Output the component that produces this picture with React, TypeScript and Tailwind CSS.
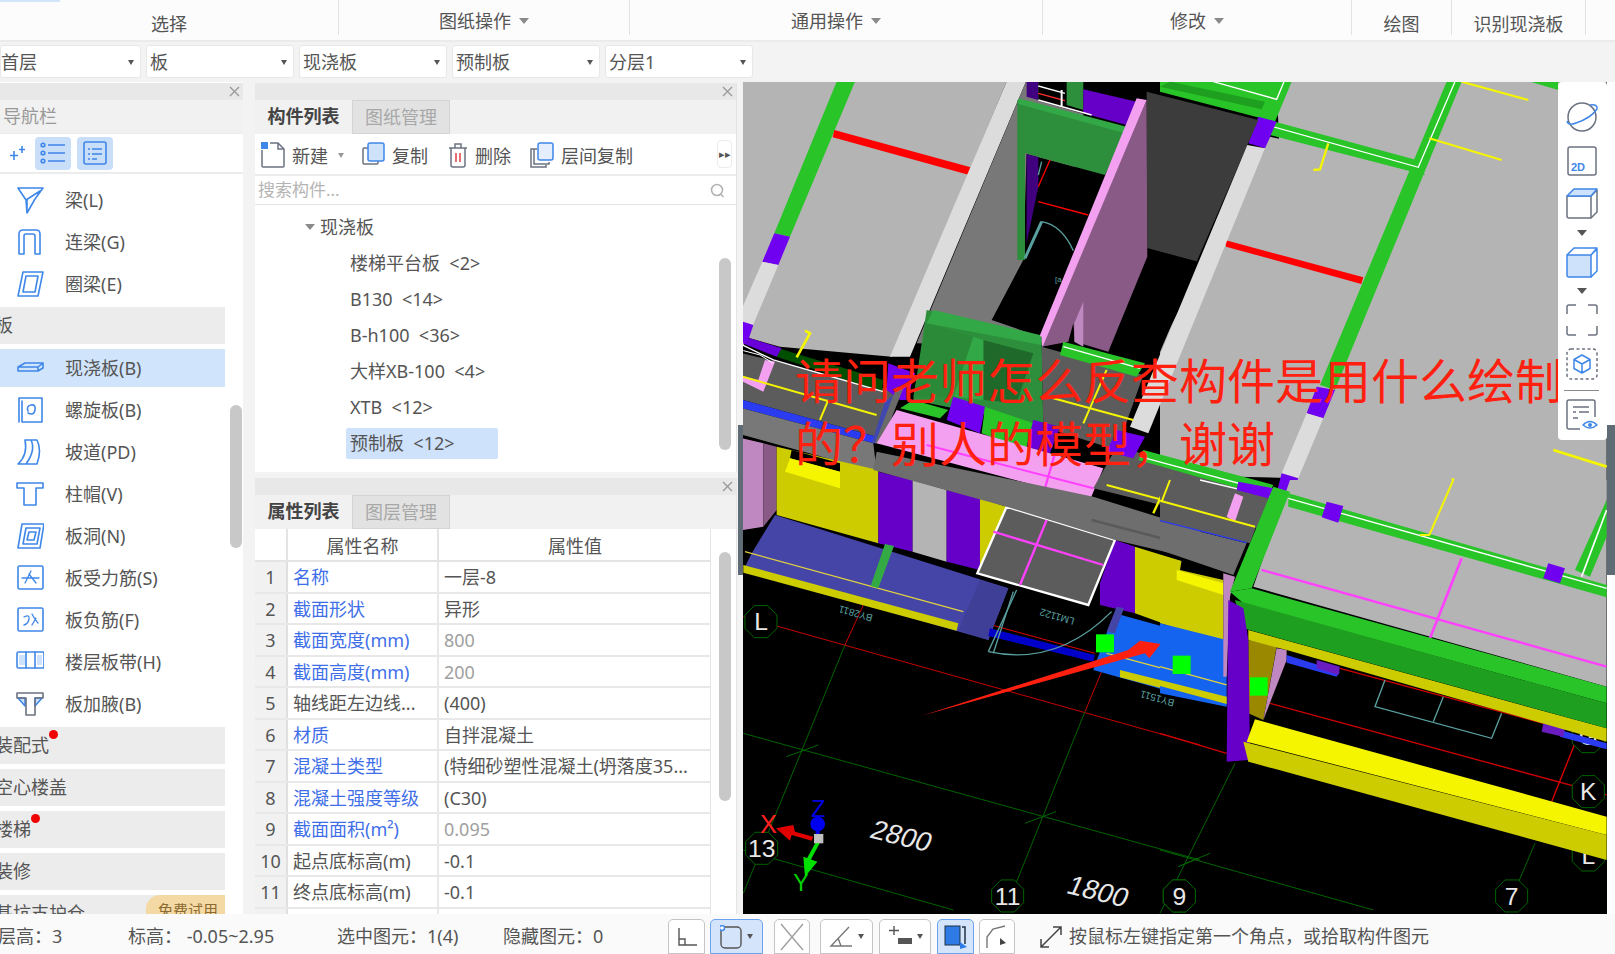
import React from 'react';

const BLUE = '#3f87e8';
const GRAY = '#6b7280';
const COLON = '\uFF1A';
const COMMA = '\uFF0C';
const QUESTION = '\uFF1F';

// ---------- small helpers for the 3D model drawing ----------
function P({ p, f }: { p: string; f: string }) {
    return <polygon points={p} fill={f} />;
}

function L({ p, c, w = 3 }: { p: string; c: string; w?: number }) {
    return <polyline points={p} fill="none" stroke={c} strokeWidth={w} />;
}

function Octagon({ x, y, label, r = 52 }: { x: number; y: number; label: string; r?: number }) {
    const pts = Array.from({ length: 8 }, (_, i) => {
        const a = (Math.PI / 4) * i + Math.PI / 8;
        return `${x + r * Math.cos(a)},${y + r * Math.sin(a)}`;
    }).join(' ');
    return (
        <g>
            <polygon points={pts} fill="#000" stroke="#006400" strokeWidth={3} />
            <text x={x} y={y + 26} textAnchor="middle" fontSize={74} fill="#e8e8e8" fontFamily="Liberation Sans, sans-serif">{label}</text>
        </g>
    );
}

function Model() {
    return (
        <svg viewBox="743 82 864 832" className="absolute inset-0 w-full h-full">
            <rect x="743" y="82" width="864" height="832" fill="#000" />

            {/* far rooms, upper right */}
            <g transform="translate(1160 80) scale(0.3333)">
                <P p="350,5 1340,5 1340,1260 400,1260" f="#b4b4b4" />
                <P p="330,170 770,270 415,1195 235,1190 0,1130 0,800" f="#b4b4b4" />
                <P p="0,0 395,5 345,125 0,35" f="#28c428" />
                <P p="30,5 315,65 305,88 0,20" f="#1f9f1f" />
                <L p="160,5 350,58 372,5" c="#fff" w={4} />
                <P p="345,125 770,240 795,285 330,165" f="#28c428" />
                <P p="860,5 905,5 525,930 480,915" f="#28c428" />
                <L p="320,135 775,262 885,5" c="#fff" w={4} />
                <L p="905,5 1105,60" c="#f5f500" w={6} />
                <L p="808,175 1025,240" c="#f5f500" w={6} />
                <L p="505,190 480,268 460,270" c="#f5f500" w={7} />
                <L p="1180,1110 1340,1160" c="#f5f500" w={8} />
                <L p="880,1195 855,1260" c="#f5f500" w={8} />
                <P p="1110,5 1195,5 1195,30" f="#28c428" />
                <P p="195,480 610,592 604,612 198,500" f="#ff0000" />
                <P p="295,110 350,125 315,205 265,190" f="#7000f0" />
                <P p="470,920 525,930 490,1015 440,1000" f="#7000f0" />
                <P p="440,1000 490,1015 415,1195 365,1180" f="#dcdcdc" />
                <P p="365,1180 415,1195 385,1260 350,1240" f="#7000f0" />
            </g>

            {/* upper left rooms */}
            <g transform="translate(740 80) scale(0.3333)">
                <P p="8,5 800,5 455,830 120,800 30,775 8,760" f="#b4b4b4" />
                <P p="290,5 345,5 150,470 103,460" f="#28c428" />
                <P p="103,460 150,470 115,555 67,545" f="#7000f0" />
                <P p="67,545 115,555 35,745 8,800 8,680" f="#dcdcdc" />
                <P p="283,150 692,262 685,284 278,172" f="#ff0000" />
                <P p="800,5 858,5 510,830 450,830" f="#dcdcdc" />
                <P p="858,5 1030,5 1030,120 900,800 530,790" f="#787878" />

                <P p="1220,35 1555,120 1370,545 1222,505" f="#3c3c3c" />
                <P p="1222,505 1375,545 1250,840 1105,815" f="#000" />
                <P p="1522,195 1575,205 1225,1060 1170,1040" f="#dcdcdc" />

                <P p="860,5 895,5 895,60 860,50" f="#400080" />
                <P p="895,5 1030,5 1060,110 895,62" f="#000" />
                <P p="980,5 1030,5 1030,90 980,75" f="#2d8f3c" />
                <P p="1030,28 1190,65 1160,135 1030,100" f="#6600c8" />
                <L p="895,18 975,40" c="#fff" w={4} />
                <L p="895,40 975,62" c="#ff3030" w={4} />
                <L p="895,60 1055,105" c="#fff" w={4} />
                <L p="965,30 965,80" c="#fff" w={6} />

                <P p="860,222 1095,285 900,770 755,720 850,540" f="#000" />
                <P p="832,60 1160,150 1095,285 855,220 855,540 832,540" f="#2d8f3c" />
                <P p="835,55 1160,140 1155,160 835,72" f="#33a847" />
                <P p="860,222 895,232 895,320 860,490" f="#400080" />
                <L p="930,240 895,320" c="#ff0000" w={4} />
                <L p="895,365 1045,405" c="#ff0000" w={4} />
                <L p="905,245 895,285" c="#5aa0a0" w={4} />
                <path d="M905 425 Q965 435 1000 512" fill="none" stroke="#5aa0a0" strokeWidth={4} />
                <L p="905,425 855,535" c="#5aa0a0" w={9} />
                <text x="945" y="605" fontSize={24} fill="#5aa0a0" fontFamily="Liberation Sans, sans-serif">[a</text>

                <P p="1220,60 1222,530 1105,815 1005,785 1000,730 985,785 905,800" f="#885a85" />
                <P p="1030,665 1003,730 1003,785 1030,800" f="#c088c0" />
                <P p="1190,55 1220,60 908,800 898,770" f="#f4a0f0" />

                {/* stair / green block */}
                <P p="560,690 905,770 910,1040 520,960" f="#2d8f3c" />
                <P p="730,780 880,820 830,970 730,960" f="#1f6a2a" />
                <P p="560,730 700,770 640,950 520,950" f="#2a8a38" />
                <P p="700,770 730,780 730,960 640,950" f="#33a847" />
                <P p="580,690 900,765 905,795 560,730" f="#33a847" />

                {/* corridor band on the left */}
                <P p="8,820 470,935 410,1070 8,960" f="#5c5c5c" />
                <P p="8,905 70,935 105,845 75,840 55,900 8,890" f="#f4a0f0" />
                <P p="115,805 430,900 425,935 110,830" f="#005000" />
                <P p="30,775 125,805 110,830 8,790" f="#6a00d8" />
                <P p="8,725 40,735 25,780 8,790" f="#7000f0" />
                <P p="445,850 525,880 500,960 480,960 440,930" f="#7000f0" />
                <L p="8,795 100,840 430,935" c="#fff" w={4} />
                <L p="10,812 60,825 100,850" c="#fff" w={3} />
                <L p="8,890 410,1005" c="#f5f500" w={6} />
                <L p="265,960 240,1020" c="#f5f500" w={6} />
                <L p="195,752 210,760 170,832" c="#f5f500" w={8} />
                <P p="8,960 410,1070 400,1090 8,985" f="#2b3cf0" />
                <P p="8,985 400,1090 410,1175 8,1065" f="#787878" />
                <P p="435,965 480,930 420,1090 395,1090" f="#4048b0" />
                <P p="470,920 490,925 425,1090 405,1090" f="#6a6a6a" />

                {/* right of pink wall */}
                <P p="905,800 1210,885 1130,1110 910,1040" f="#5c5c5c" />
                <P p="970,785 1215,850 1190,890 960,825" f="#28c428" />
                <L p="970,800 1200,865" c="#fff" w={4} />
                <L p="940,955 1180,1020" c="#f5f500" w={6} />
                <L p="1100,870 1030,1030" c="#f5f500" w={6} />

                {/* band of purple/green columns */}
                <P p="520,960 625,990 600,1015 480,985" f="#28c428" />
                <P p="640,950 735,980 720,1060 620,1020" f="#7000f0" />
                <P p="735,980 880,1030 860,1110 725,1060" f="#28c428" />
                <P p="880,1020 960,1040 930,1120 860,1100" f="#6a00d8" />

                {/* pink floor */}
                <P p="470,990 1090,1165 1050,1260 410,1090" f="#f4a0f0" />
                <L p="560,1095 1060,1225" c="#ff40ff" w={6} />
                <L p="945,1120 915,1225" c="#ff40ff" w={7} />

                {/* dark tile, right */}
                <P p="1130,1100 1600,1225 1550,1345 1060,1225" f="#5c5c5c" />
                <P p="1130,1050 1215,1070 1180,1135 1100,1115" f="#7000f0" />
                <P p="1210,1110 1600,1215 1585,1250 1195,1140" f="#28c428" />
                <L p="1200,1130 1600,1238" c="#fff" w={4} />
                <L p="1100,1215 1380,1290" c="#f5f500" w={6} />
                <L p="1295,1180 1240,1300" c="#f5f500" w={7} />
            </g>

            {/* lower left: walls, platforms, axis grid */}
            <g transform="translate(740 480) scale(0.3333)">
                <P p="8,-125 70,-110 70,140 8,150" f="#c088c0" />
                <P p="70,-110 110,-100 110,90 70,140" f="#885a85" />
                <P p="110,-100 415,-30 415,190 110,105" f="#cccc00" />
                <P p="155,-90 300,-50 300,-25 150,-65" f="#000" />
                <P p="150,-65 300,-25 300,25 135,-25" f="#f5f500" />
                <P p="415,-25 518,0 518,215 415,190" f="#6600c8" />
                <P p="518,0 620,30 620,245 518,215" f="#b4b4b4" />
                <P p="620,30 720,55 720,270 620,245" f="#6600c8" />
                <P p="720,55 800,80 712,280 720,270" f="#cccc00" />
                <P p="1125,180 1185,200 1185,400 1080,375 1080,310" f="#6600c8" />
                <P p="1185,200 1380,260 1380,470 1185,400" f="#cccc00" />
                <P p="1325,235 1380,250 1380,290 1325,270" f="#000" />
                <P p="1315,270 1380,290 1380,325 1315,300" f="#f5f500" />

                {/* axis lines */}
                <L p="10,410 1380,795" c="#c80000" />
                <L p="755,435 1065,520" c="#e00000" />
                <L p="370,375 315,495" c="#c80000" />
                <L p="315,495 10,1240" c="#006400" />
                <L p="1085,575 1035,695" c="#c80000" />
                <L p="1035,695 800,1280" c="#006400" />
                <L p="10,760 1380,1140" c="#006400" />
                <L p="10,1110 640,1290" c="#006400" />
                <L p="140,830 235,795" c="#006400" />
                <L p="855,1030 948,995" c="#006400" />
                <L p="1315,1160 1375,1135" c="#006400" />

                <P p="105,105 805,325 745,480 10,270 35,220" f="#4545a8" />
                <P p="805,325 745,480 655,450 720,300" f="#3f3f98" />
                <P p="10,255 655,430 650,452 10,278" f="#cccc00" />
                <L p="15,215 670,395" c="#e0d040" w={4} />
                <P p="435,192 462,198 415,325 392,318" f="#33aa44" />

                <P p="750,445 1065,525 1060,545 745,468" f="#0000c8" />
                <path d="M745 515 Q950 560 1115 395" fill="none" stroke="#5aa0a0" strokeWidth={4} />
                <L p="830,330 745,515" c="#5aa0a0" w={4} />
                <L p="820,335 760,520" c="#5aa0a0" w={4} />

                <P p="800,80 1125,180 1045,375 712,280" f="#5c5c5c" />
                <polygon points="800,80 1125,180 1045,375 712,280" fill="none" stroke="#fff" strokeWidth={7} />
                <L p="760,155 1090,255" c="#ff40ff" w={7} />
                <L p="920,120 840,315" c="#ff40ff" w={7} />

                {/* gray beam across the model */}
                <P p="410,-85 1060,50 1380,150 1380,240 1125,180 800,80 400,-30" f="#6e6e6e" />
                <L p="1055,120 1380,205" c="#5a5a5a" w={8} />

                <P p="1125,400 1380,470 1380,660 1060,570 1100,460" f="#1464f0" />
                <P p="1140,570 1380,630 1380,655 1140,592" f="#cccc00" />
                <L p="1100,520 1380,595" c="#e0d040" w={4} />
                <P p="1130,380 1152,385 1125,460 1100,455" f="#4545a8" />
                <P p="1068,463 1122,463 1122,517 1068,517" f="#00ff00" />
                <P p="1298,527 1352,527 1352,582 1298,582" f="#00ff00" />

                <text transform="translate(400 405) rotate(196)" fontSize={30} fill="#5aa0a0" fontFamily="Liberation Sans, sans-serif">BY2811</text>
                <text transform="translate(1005 415) rotate(196)" fontSize={30} fill="#5aa0a0" fontFamily="Liberation Sans, sans-serif">LM1122</text>
                <text transform="translate(1305 660) rotate(196)" fontSize={30} fill="#5aa0a0" fontFamily="Liberation Sans, sans-serif">BY1511</text>

                <Octagon x={63} y={425} label="L" />
                <Octagon x={65} y={1105} label="13" />
                <Octagon x={803} y={1248} label="11" />
                <Octagon x={1318} y={1248} label="9" />

                <text transform="translate(385 1072) rotate(14) skewX(-10)" fontSize={82} fill="#e8e8e8" fontFamily="Liberation Sans, sans-serif">2800</text>
                <text transform="translate(975 1238) rotate(14) skewX(-10)" fontSize={82} fill="#e8e8e8" fontFamily="Liberation Sans, sans-serif">1800</text>

                {/* axis gizmo */}
                <text x="60" y="1060" fontSize={76} fill="#ff2020" fontFamily="Liberation Sans, sans-serif">X</text>
                <text x="214" y="1012" fontSize={70} fill="#0000e0" fontFamily="Liberation Sans, sans-serif">Z</text>
                <text x="160" y="1232" fontSize={70} fill="#00d000" fontFamily="Liberation Sans, sans-serif">Y</text>
                <P p="108,1045 160,1035 165,1055 220,1070 215,1082 155,1065 150,1082" f="#e00000" />
                <L p="233,1040 233,1070" c="#0000e0" w={12} />
                <circle cx="233" cy="1032" r="22" fill="#0000f0" />
                <L p="235,1085 205,1140" c="#00e000" w={12} />
                <P p="190,1130 232,1145 195,1190" f="#00e000" />
                <rect x="222" y="1062" width="28" height="28" fill="#c0c0c0" />

                {/* the red arrow added on the screenshot */}
                <P p="545,707 1165,510 1200,482 1262,492 1228,535 1215,520" f="#ff2010" />
            </g>

            {/* lower right: big slab, beam */}
            <g transform="translate(1160 480) scale(0.3333)">
                <P p="0,225 190,280 190,480 0,430" f="#cccc00" />
                <P p="65,240 190,275 190,300 60,270" f="#000" />
                <P p="50,270 190,310 190,345 50,300" f="#f5f500" />
                <P p="0,430 200,480 200,680 0,640" f="#1464f0" />
                <P p="0,600 200,650 200,672 0,618" f="#cccc00" />
                <L p="0,560 200,615" c="#e0d040" w={4} />
                <P p="38,527 92,527 92,582 38,582" f="#00ff00" />

                <P p="0,-30 320,55 270,190 0,125" f="#5c5c5c" />
                <P p="0,125 260,190 220,285 0,210" f="#6e6e6e" />
                <L p="0,122 260,188" c="#2b3cf0" w={4} />
                <P p="225,40 250,50 225,125 200,110" f="#f4a0f0" />
                <L p="0,62 285,140" c="#f5f500" w={6} />
                <L p="30,0 5,65" c="#f5f500" w={6} />
                <L p="120,0 330,50" c="#fff" w={4} />
                <P p="235,5 340,25 325,55 230,30" f="#7000f0" />

                <P p="390,0 1340,0 1340,620 280,320" f="#b4b4b4" />
                <P p="385,40 1340,315 1340,352 385,80" f="#28c428" />
                <L p="385,55 1340,325" c="#fff" w={4} />
                <L p="880,0 808,165" c="#f5f500" w={6} />
                <L p="780,165 810,165" c="#f5f500" w={6} />
                <P p="500,65 550,78 535,128 485,112" f="#7000f0" />
                <P p="1165,250 1215,265 1200,310 1150,295" f="#7000f0" />
                <P p="1340,60 1245,270 1290,290 1340,170" f="#28c428" />
                <L p="1340,90 1265,290" c="#fff" w={5} />
                <L p="305,270 1340,560" c="#ff40ff" w={7} />
                <L p="905,235 810,475" c="#ff40ff" w={8} />

                <P p="190,280 225,290 210,350 200,590 190,590" f="#c088c0" />
                <P p="265,480 350,500 310,720 265,700" f="#998800" />
                <P p="350,505 380,510 380,540 310,720" f="#c088c0" />

                <L p="330,670 1340,945" c="#d00000" w={4} />
                <L p="0,760 200,820" c="#d00000" w={4} />
                <L p="540,565 1150,730" c="#d00000" w={4} />
                <L p="1245,790 1175,965" c="#e00000" w={4} />
                <polyline points="675,600 645,680 995,775 1025,700" fill="none" stroke="#5aa0a0" strokeWidth={4} />
                <L p="850,650 820,725" c="#5aa0a0" w={4} />
                <L p="225,850 0,1300" c="#006400" />
                <L p="1125,1090 1040,1290" c="#006400" />
                <L p="0,1110 640,1290" c="#006400" />
                <L p="55,1160 150,1120" c="#006400" />

                <Octagon x={1285} y={770} label="G" />
                <Octagon x={1285} y={935} label="K" />
                <Octagon x={1285} y={1125} label="L" />
                <Octagon x={1055} y={1248} label="7" />
                <Octagon x={58} y={1248} label="9" />

                <P p="380,525 540,575 530,590 380,548" f="#2b3cf0" />
                <P p="470,540 540,560 535,585 470,565" f="#6a1cc0" />
                <P p="1200,750 1340,790 1340,808 1200,770" f="#2b3cf0" />
                <P p="1150,730 1215,745 1210,770 1145,755" f="#6a1cc0" />

                <P p="265,450 1340,745 1340,785 380,510 265,480" f="#cccc00" />
                <P p="340,20 390,35 275,325 210,335" f="#28c428" />
                <P p="210,335 275,325 1340,620 1340,670 250,370" f="#28c428" />
                <P p="225,360 1340,670 1340,745 250,445" f="#1f9f1f" />

                <P p="205,360 250,385 265,480 270,820 265,840 200,845" f="#6600c8" />
                <P p="270,592 323,592 323,647 270,647" f="#00ff00" />
                <P p="285,718 1340,1010 1340,1065 260,785" f="#f5f500" />
                <P p="250,785 1340,1065 1340,1140 265,845" f="#cccc00" />
            </g>
        </svg>
    );
}

// ---------- icons ----------
function Ico({ children, w = 28, h = 28 }: { children: React.ReactNode; w?: number; h?: number }) {
    return (
        <svg width={w} height={h} viewBox="0 0 28 28" fill="none" stroke={BLUE} strokeWidth="1.6" strokeLinejoin="round" strokeLinecap="round" className="shrink-0">
            {children}
        </svg>
    );
}

const navIcons: Record<string, React.ReactNode> = {
    beam: <Ico><path d="M2 2h25l-8 11-8 14-1-13zM10 14l14-9M11 27V14" /></Ico>,
    link: <Ico><path d="M3 26V6q0-4 4-4h13q4 0 4 4v20h-5V8q0-2-2-2H10q-2 0-2 2v18z" /></Ico>,
    ring: <Ico><path d="M7 2h20l-5 24H2zM10 6h12l-3 16H7z" /></Ico>,
    slab: <Ico><path d="M2 13l7-4h18v5l-5 3H2zM2 13h20v4M22 13l5-4" /></Ico>,
    spiral: <Ico><path d="M3 26V2h23v24H6V5M12 17q6 3 7-3t-4-5q-5 1-3 6" /></Ico>,
    ramp: <Ico><path d="M9 2h12q5 10 0 24H2q10-9 7-24zM15 2q5 10-5 24" /></Ico>,
    cap: <Ico><path d="M1 3h26v5H20v17H8V8H1zM1 8h7M20 8h7" /></Ico>,
    hole: <Ico><path d="M6 2h22l-4 24H2zM10 6h14l-3 16H7zM13 10h7l-2 8h-7z" /></Ico>,
    main: <Ico><rect x="2" y="2" width="25" height="23" rx="1.5" /><path d="M6 14h17M15 7q-4 8-6 12M13 10l7 9" strokeWidth="1.3" /></Ico>,
    neg: <Ico><rect x="2" y="2" width="25" height="23" rx="1.5" /><path d="M8 11q6-3 5 2t-5 6M16 8q3 6 6 9M20 12l-4 7" strokeWidth="1.3" /></Ico>,
    band: <Ico><rect x="1" y="4" width="27" height="16" rx="1.5" /><path d="M10 4v16M19 4v16" /><path d="M3 7h6v10H3z" fill="#cfe2fb" stroke="none" /><path d="M21 7h5v10h-5z" fill="#cfe2fb" stroke="none" /></Ico>,
    haunch: <Ico><path d="M2 8l7 0v8zM26 8h-7v8z" fill="#cfe2fb" /><path d="M1 3h26v5H19v17H10V8H1z" stroke={GRAY} /></Ico>,
};

const navItems = [
    ['beam', '梁(L)'], ['link', '连梁(G)'], ['ring', '圈梁(E)'],
];
const slabItems = [
    ['slab', '现浇板(B)'], ['spiral', '螺旋板(B)'], ['ramp', '坡道(PD)'], ['cap', '柱帽(V)'], ['hole', '板洞(N)'],
    ['main', '板受力筋(S)'], ['neg', '板负筋(F)'], ['band', '楼层板带(H)'], ['haunch', '板加腋(B)'],
];

function NavRow({ icon, label, active }: { icon: string; label: string; active?: boolean }) {
    return (
        <div className={`flex items-center h-[38px] my-[2px] w-[225px] pl-[16px] gap-[21px] ${active ? 'bg-[#d0e4fc]' : ''}`}>
            {navIcons[icon]}
            <span className="text-[18px] text-[#555]">{label}</span>
        </div>
    );
}

function Group({ label, dot }: { label: string; dot?: boolean }) {
    return (
        <div className="relative flex items-center h-[37px] w-[225px] mb-[5px] bg-[#ececec] text-[18px] text-[#555] -indent-[5px] shrink-0">
            <span className="relative">
                {label}
                {dot && <span className="absolute -top-[2px] -right-[9px] w-[9px] h-[9px] rounded-full bg-[#f00000]" />}
            </span>
        </div>
    );
}

function PanelHead() {
    return (
        <div className="flex items-center justify-end h-[17px] bg-[#e8e8e8] pr-[2px] shrink-0">
            <svg width="13" height="13" viewBox="0 0 13 13" stroke="#9a9a9a" strokeWidth="1.4"><path d="M2 2l9 9M11 2l-9 9" /></svg>
        </div>
    );
}

function Tabs({ a, b }: { a: string; b: string }) {
    return (
        <div className="flex h-[34px] bg-[#f1f1f1] shrink-0">
            <div className="w-[97px] flex items-center justify-center text-[18px] font-bold text-[#444] border-b border-[#f1f1f1]">{a}</div>
            <div className="w-[98px] flex items-center justify-center text-[18px] text-[#a8a8a8] bg-[#e2e2e2] border border-[#d4d4d4]">{b}</div>
        </div>
    );
}

function ToolBtn({ icon, label, w, arrow }: { icon: React.ReactNode; label: string; w: number; arrow?: boolean }) {
    return (
        <div className="flex items-center gap-[7px] shrink-0" style={{ width: w }}>
            {icon}
            <span className="text-[18px] text-[#555] whitespace-nowrap pt-[2px]">{label}</span>
            {arrow && <span className="ml-[3px] w-0 h-0 border-x-[3px] border-x-transparent border-t-[5px] border-t-[#999]" />}
        </div>
    );
}

const treeItems = ['楼梯平台板 <2>', 'B130 <14>', 'B-h100 <36>', '大样XB-100 <4>', 'XTB <12>', '预制板 <12>'];

const props: [string, string, string, boolean, boolean][] = [
    ['1', '名称', '一层-8', true, false],
    ['2', '截面形状', '异形', true, false],
    ['3', '截面宽度(mm)', '800', true, true],
    ['4', '截面高度(mm)', '200', true, true],
    ['5', '轴线距左边线...', '(400)', false, false],
    ['6', '材质', '自拌混凝土', true, false],
    ['7', '混凝土类型', '(特细砂塑性混凝土(坍落度35...', true, false],
    ['8', '混凝土强度等级', '(C30)', true, false],
    ['9', '截面面积(m²)', '0.095', true, true],
    ['10', '起点底标高(m)', '-0.1', false, false],
    ['11', '终点底标高(m)', '-0.1', false, false],
    ['', '', '', false, false],
];

function Select({ label, w, cut }: { label: string; w: number; cut?: boolean }) {
    return (
        <div className={`flex items-center justify-between h-[33px] bg-white rounded-[3px] border border-[#e8e8e8] pr-[6px] pt-[1px] text-[18px] text-[#555] shrink-0 ${cut ? 'pl-0' : 'pl-[3px]'}`} style={{ width: w }}>
            <span>{label}</span>
            <span className="w-0 h-0 border-x-[3px] border-x-transparent border-t-[5px] border-t-[#555]" />
        </div>
    );
}

function RibbonCell({ label, w, arrow, low }: { label: string; w: number; arrow?: boolean; low?: boolean }) {
    return (
        <div className={`flex justify-center items-center gap-[8px] h-[35px] border-r border-[#e2e2e2] text-[18px] text-[#555] shrink-0 ${low ? 'pt-[13px]' : 'pt-[7px]'}`} style={{ width: w }}>
            <span>{label}</span>
            {arrow && <span className="w-0 h-0 border-x-[5px] border-x-transparent border-t-[6px] border-t-[#8a8a8a]" />}
        </div>
    );
}

function StatusBtn({ w, active, children }: { w: number; active?: boolean; children: React.ReactNode }) {
    return (
        <div className={`flex items-center justify-center h-[35px] rounded-t-[5px] border shrink-0 ${active ? 'bg-[#d4e4fb] border-[#6da3ee]' : 'bg-white border-[#c4c4c4]'}`} style={{ width: w }}>
            {children}
        </div>
    );
}

function SmallArrow() {
    return <span className="ml-[5px] w-0 h-0 border-x-[3px] border-x-transparent border-t-[5px] border-t-[#555]" />;
}

function RightTools() {
    const s = { fill: 'none', stroke: GRAY, strokeWidth: 1.5, strokeLinejoin: 'round' as const };
    const b = { fill: 'none', stroke: BLUE, strokeWidth: 1.5, strokeLinejoin: 'round' as const };
    return (
        <div className="absolute top-0 right-0 w-[49px] h-[358px] bg-white rounded-[4px] flex flex-col items-center pt-[19px] pr-[2px]">
            <svg width="34" height="32" viewBox="0 0 34 32" className="shrink-0">
                <circle cx="17" cy="16" r="14" {...s} />
                <path d="M2 20q1 5 9 2Q26 17 32 8q1-5-7-4" {...b} />
            </svg>
            <svg width="30" height="30" viewBox="0 0 30 30" className="mt-[13px] shrink-0">
                <rect x="1" y="1" width="28" height="28" rx="2" {...s} />
                <text x="4" y="25" fontSize="11" fontWeight="700" fill={BLUE} fontFamily="Liberation Sans, sans-serif">2D</text>
            </svg>
            <svg width="32" height="32" viewBox="0 0 32 32" className="mt-[11px] shrink-0">
                <path d="M1 9h24v22H3q-2 0-2-2z" {...s} />
                <path d="M25 9l6-6v22l-6 6" {...s} />
                <path d="M1 9l7-7h23l-6 7z" fill="#cfe2fb" stroke={BLUE} strokeWidth="1.5" strokeLinejoin="round" />
            </svg>
            <span className="mt-[11px] shrink-0 w-0 h-0 border-x-[5px] border-x-transparent border-t-[6px] border-t-[#555]" />
            <svg width="32" height="32" viewBox="0 0 32 32" className="mt-[10px] shrink-0">
                <path d="M1 9h24v22H3q-2 0-2-2z" fill="#cfe2fb" stroke={BLUE} strokeWidth="1.5" />
                <path d="M25 9l6-6v22l-6 6M1 9l7-7h23l-6 7" {...b} />
            </svg>
            <span className="mt-[10px] shrink-0 w-0 h-0 border-x-[5px] border-x-transparent border-t-[6px] border-t-[#555]" />
            <svg width="32" height="32" viewBox="0 0 32 32" className="mt-[10px] shrink-0">
                <path d="M1 10V3q0-2 2-2h7M22 1h7q2 0 2 2v7M31 22v7q0 2-2 2h-7M10 31H3q-2 0-2-2v-7" {...s} />
            </svg>
            <svg width="32" height="32" viewBox="0 0 32 32" className="mt-[12px] shrink-0">
                <rect x="1" y="1" width="30" height="30" rx="4" {...s} strokeDasharray="3 2.5" />
                <path d="M16 7l8 4.5v9L16 25l-8-4.5v-9zM8 11.500l8 4.500 8-4.500M16 16v9" {...b} />
            </svg>
            <div className="w-[35px] h-px bg-[#8a8a8a] mt-[10px] shrink-0" />
            <svg width="32" height="32" viewBox="0 0 32 32" className="mt-[8px] shrink-0">
                <path d="M14 30H3q-2 0-2-2V3q0-2 2-2h24q2 0 2 2v15" {...s} />
                <path d="M7 8h16M7 13h3M13 13h10M7 19h5" {...s} />
                <path d="M17 26q7-7 14 0q-7 6-14 0z" {...b} />
                <circle cx="24" cy="26" r="2" fill={BLUE} />
            </svg>
        </div>
    );
}

export default function App() {
    return (
        <div className="w-[1615px] h-[954px] overflow-hidden flex flex-col bg-[#f3f3f3] [font-family:'Noto_Sans','Noto_Sans_CJK_SC',sans-serif]">
            {/* ribbon */}
            <div className="relative h-[42px] bg-[#fcfcfc] flex shrink-0 border-b-2 border-[#ebebeb]">
                <span className="absolute top-0 left-0 w-[60px] h-[2px] bg-[#d3e5fb]" />
                <RibbonCell label="选择" w={339} low />
                <RibbonCell label="图纸操作" w={291} arrow />
                <RibbonCell label="通用操作" w={413} arrow />
                <RibbonCell label="修改" w={309} arrow />
                <RibbonCell label="绘图" w={100} low />
                <RibbonCell label="识别现浇板" w={134} low />
            </div>

            {/* dropdowns */}
            <div className="h-[40px] flex items-start gap-[5px] pt-[3px] shrink-0">
                <Select label="首层" w={141} cut />
                <Select label="板" w={148} />
                <Select label="现浇板" w={148} />
                <Select label="预制板" w={148} />
                <Select label="分层1" w={148} />
            </div>

            <div className="flex flex-1 min-h-0">
                {/* navigation */}
                <div className="w-[243px] h-[832px] pt-px flex flex-col bg-white overflow-hidden shrink-0 relative">
                    <PanelHead />
                    <div className="h-[33px] flex items-center bg-[#f1f1f1] text-[18px] text-[#999] pl-[3px] shrink-0">导航栏</div>
                    <div className="h-[41px] flex items-center border-b-2 border-t border-[#ececec] shrink-0 pl-[10px]">
                        <svg width="18" height="20" viewBox="0 0 18 20" stroke={BLUE} strokeWidth="1.6"><path d="M4 8v9M0 12.500h8M12 3v7M9 6.500h6" /></svg>
                        <span className="ml-[7px] w-[36px] h-[33px] rounded-[4px] bg-[#c9def8] flex items-center justify-center">
                            <svg width="26" height="24" viewBox="0 0 26 24" fill="none" stroke={BLUE} strokeWidth="1.600"><path d="M8 4h17M8 12h17M8 20h17" /><circle cx="3" cy="4" r="1.800" /><circle cx="3" cy="12" r="1.800" /><circle cx="3" cy="20" r="1.800" /></svg>
                        </span>
                        <span className="ml-[6px] w-[36px] h-[33px] rounded-[4px] bg-[#c9def8] flex items-center justify-center">
                            <svg width="24" height="24" viewBox="0 0 24 24" fill="none" stroke={BLUE} strokeWidth="1.600"><rect x="1" y="1" width="22" height="22" rx="2" /><path d="M5 8h2M9 8h10M5 13h2M9 13h10M5 18h2M9 18h5" /></svg>
                        </span>
                    </div>
                    <div className="flex flex-col pt-[5px]">
                        {navItems.map(([i, l]) => <NavRow key={l} icon={i} label={l} />)}
                    </div>
                    <div className="mt-[2px]"><Group label="板" /></div>
                    <div className="flex flex-col -mt-[2px]">
                        {slabItems.map(([i, l], n) => <NavRow key={l} icon={i} label={l} active={n === 0} />)}
                    </div>
                    <div className="mt-[2px]">
                        <Group label="装配式" dot />
                        <Group label="空心楼盖" />
                        <Group label="楼梯" dot />
                        <Group label="装修" />
                        <div className="relative">
                            <Group label="基坑支护仓" />
                            <span className="absolute top-0 left-[146px] w-[79px] h-[37px] rounded-l-[14px] bg-[#f4d9a4] text-[15px] text-[#8a6a30] pl-[12px] pt-[4px]">免费试用</span>
                        </div>
                    </div>
                    <span className="absolute left-[230px] top-[323px] w-[12px] h-[143px] rounded-full bg-[#c8c8c8]" />
                </div>

                <div className="w-[12px] shrink-0" />

                {/* middle panels */}
                <div className="w-[482px] h-[832px] pt-px flex flex-col shrink-0">
                    <div className="relative h-[389px] flex flex-col bg-white border-r border-[#e4e4e4] shrink-0">
                        <PanelHead />
                        <Tabs a="构件列表" b="图纸管理" />
                        <div className="relative h-[42px] flex items-center pl-[6px] pt-[2px] border-b-2 border-[#ececec] shrink-0">
                            <ToolBtn w={101} label="新建" arrow icon={
                                <svg width="24" height="26" viewBox="0 0 24 26" fill="none" stroke={GRAY} strokeWidth="1.5"><path d="M1 8v16q0 1 1 1h20q1 0 1-1V7l-6-6H9" /><path d="M17 1v6h6" /><rect x="0" y="0" width="7" height="7" fill={BLUE} stroke="none" /></svg>
                            } />
                            <ToolBtn w={86} label="复制" icon={
                                <svg width="23" height="26" viewBox="0 0 23 26" fill="none" strokeWidth="1.5"><path d="M6 6H2q-1 0-1 1v14q0 1 1 1h13q1 0 1-1v-2" stroke={GRAY} /><rect x="6" y="1" width="16" height="18" rx="2" fill="#cfe2fb" stroke={BLUE} /></svg>
                            } />
                            <ToolBtn w={82} label="删除" icon={
                                <svg width="20" height="26" viewBox="0 0 20 26" fill="none" strokeWidth="1.500" stroke={GRAY}><path d="M1 6h18M7 6V2h6v4M3 6v17q0 2 2 2h10q2 0 2-2V6" /><path d="M8 11v9M12 11v9" stroke="#e04040" /></svg>
                            } />
                            <ToolBtn w={110} label="层间复制" icon={
                                <svg width="24" height="26" viewBox="0 0 24 26" fill="none" strokeWidth="1.5"><path d="M4 7H1v18h15v-2M7 7H4v15h15v-2" stroke={GRAY} /><rect x="8" y="1" width="15" height="17" rx="2" fill="#e4eefc" stroke={BLUE} /></svg>
                            } />
                            <span className="absolute right-[4px] top-[6px] w-[15px] h-[28px] rounded-[4px] border border-[#ececec] flex items-center justify-center text-[11px] text-[#555]">▸▸</span>
                        </div>
                        <div className="h-[29px] flex items-center justify-between pl-[3px] pr-[11px] border-b border-[#e4e4e4] shrink-0 text-[17px] text-[#b4b4b4]">
                            <span>搜索构件...</span>
                            <svg width="15" height="15" viewBox="0 0 15 15" fill="none" stroke="#b4b4b4" strokeWidth="1.6"><circle cx="7" cy="7" r="5.500" /><path d="M10.500 11l3 3" /></svg>
                        </div>
                        <div className="flex flex-col pt-[4px] text-[18px] text-[#555]">
                            <div className="h-[36px] flex items-center pl-[50px] gap-[5px]">
                                <span className="w-0 h-0 border-x-[5px] border-x-transparent border-t-[6px] border-t-[#8a8a8a]" />
                                现浇板
                            </div>
                            {treeItems.map((t, i) => (
                                <div key={t} className="h-[36px] flex items-center pl-[91px]">
                                    <span className={`h-[31px] flex items-center whitespace-pre ${i === 5 ? 'bg-[#cfe2fb] rounded-[2px] w-[152px] pl-[4px]' : 'pl-[4px]'}`}>{t.replace(' ', '  ')}</span>
                                </div>
                            ))}
                        </div>
                        <span className="absolute left-[464px] top-[175px] w-[12px] h-[192px] rounded-full bg-[#c8c8c8]" />
                    </div>

                    <div className="h-[6px] shrink-0" />

                    <div className="relative flex-1 min-h-0 flex flex-col bg-white border-r border-[#e4e4e4] overflow-hidden">
                        <PanelHead />
                        <Tabs a="属性列表" b="图层管理" />
                        <div className="w-[456px] border-r border-[#e4e4e4]">
                            <div className="grid grid-cols-[33px_151px_272px] h-[33px] border-b-2 border-[#e4e4e4] text-[18px] text-[#555]">
                                <div className="border-r-2 border-[#e4e4e4]" />
                                <div className="border-r-2 border-[#e4e4e4] flex items-center justify-center pt-[3px]">属性名称</div>
                                <div className="flex items-center justify-center pt-[3px]">属性值</div>
                            </div>
                            {props.map(([n, k, v, link, muted], i) => (
                                <div key={i} className="grid grid-cols-[33px_151px_272px] h-[31.5px] border-b-2 border-[#e8e8e8] text-[18px]">
                                    <div className="bg-[#f1f1f1] border-r-2 border-[#e0e0e0] flex items-center justify-center text-[#555] pt-[2px]">{n}</div>
                                    <div className={`border-r-2 border-[#e8e8e8] pl-[5px] pt-[2px] flex items-center whitespace-nowrap overflow-hidden ${link ? 'text-[#3f6fe8]' : 'text-[#555]'}`}>{k}</div>
                                    <div className={`pl-[5px] pt-[2px] flex items-center whitespace-nowrap overflow-hidden ${muted ? 'text-[#a0a0a0]' : 'text-[#555]'}`}>{v}</div>
                                </div>
                            ))}
                        </div>
                        <span className="absolute left-[464px] top-[74px] w-[12px] h-[249px] rounded-full bg-[#c8c8c8]" />
                    </div>
                </div>

                <div className="w-[6px] shrink-0 flex items-start pt-[343px]"><span className="ml-[1px] w-[5px] h-[150px] bg-[#5f6b75]" /></div>

                {/* 3D view */}
                <div className="relative w-[864px] h-[832px] shrink-0 overflow-hidden">
                    <Model />
                    <div className="absolute left-[52px] top-[267px] w-[770px] text-[48px] leading-[63px] text-[#ff2010]">
                        {`请问老师怎么反查构件是用什么绘制的${QUESTION}别人的模型${COMMA}谢谢`}
                    </div>
                    <RightTools />
                </div>

                <div className="w-[8px] shrink-0 bg-white pt-[343px]"><div className="w-[8px] h-[150px] bg-[#5f6b75]" /></div>
            </div>

            {/* status bar */}
            <div className="relative h-[40px] bg-[#fafafa] flex items-end shrink-0 text-[18px] text-[#555] whitespace-nowrap">
                <div className="w-[668px] h-[40px] flex items-center shrink-0 pt-[5px]">
                    <span className="w-[128px] -indent-[2px]">{`层高${COLON}3`}</span>
                    <span className="w-[209px]">{`标高${COLON}\u00A0-0.05~2.95`}</span>
                    <span className="w-[166px]">{`选中图元${COLON}1(4)`}</span>
                    <span>{`隐藏图元${COLON}0`}</span>
                </div>
                <StatusBtn w={37}>
                    <svg width="22" height="22" viewBox="0 0 22 22" fill="none" stroke="#555" strokeWidth="1.4"><path d="M3 2v17h18M3 13h6v6" /></svg>
                </StatusBtn>
                <div className="w-[5px]" />
                <StatusBtn w={53} active>
                    <svg width="22" height="24" viewBox="0 0 22 24" fill="none" stroke="#555" strokeWidth="1.4"><rect x="1" y="2" width="20" height="21" rx="4" /><circle cx="2" cy="3" r="2.500" fill="#fff" stroke={BLUE} /></svg>
                    <SmallArrow />
                </StatusBtn>
                <div className="w-[11px]" />
                <StatusBtn w={36}>
                    <svg width="26" height="28" viewBox="0 0 26 28" fill="none" stroke="#a0a0a0" strokeWidth="1.4"><path d="M2 1l22 26M24 1L2 27" /></svg>
                </StatusBtn>
                <div className="w-[10px]" />
                <StatusBtn w={53}>
                    <svg width="24" height="22" viewBox="0 0 24 22" fill="none" stroke="#777" strokeWidth="1.4"><path d="M20 1L2 20h21M9 12l3 8" /></svg>
                    <SmallArrow />
                </StatusBtn>
                <div className="w-[6px]" />
                <StatusBtn w={52}>
                    <svg width="24" height="24" viewBox="0 0 24 24" fill="none" stroke="#555" strokeWidth="1.4"><path d="M6 1v9M1 5.500h10" /><rect x="10" y="13" width="14" height="6" fill="#555" stroke="none" /></svg>
                    <SmallArrow />
                </StatusBtn>
                <div className="w-[6px]" />
                <StatusBtn w={37} active>
                    <svg width="26" height="26" viewBox="0 0 26 26"><rect x="2" y="2" width="15" height="19" fill="#2f7be6" stroke="#234" strokeWidth="1" /><path d="M19 3h3v17" fill="none" stroke="#234" strokeWidth="1.5" /><path d="M17 18l7 5-7 2z" fill="#2f7be6" /></svg>
                </StatusBtn>
                <div className="w-[5px]" />
                <StatusBtn w={36}>
                    <svg width="26" height="26" viewBox="0 0 26 26" fill="none" stroke="#777" strokeWidth="1.4"><path d="M3 24V13l6-8 12-3" /><path d="M16 14l6 5-6 2z" fill="#444" stroke="none" /></svg>
                </StatusBtn>
                <div className="w-[24px]" />
                <div className="h-[40px] flex items-center gap-[6px] pt-[5px]">
                    <svg width="24" height="24" viewBox="0 0 24 24" fill="none" stroke="#444" strokeWidth="1.5"><path d="M2 22L22 2M14 2h8v8M2 14v8h8" /></svg>
                    <span>{`按鼠标左键指定第一个角点${COMMA}或拾取构件图元`}</span>
                </div>
            </div>
        </div>
    );
}
